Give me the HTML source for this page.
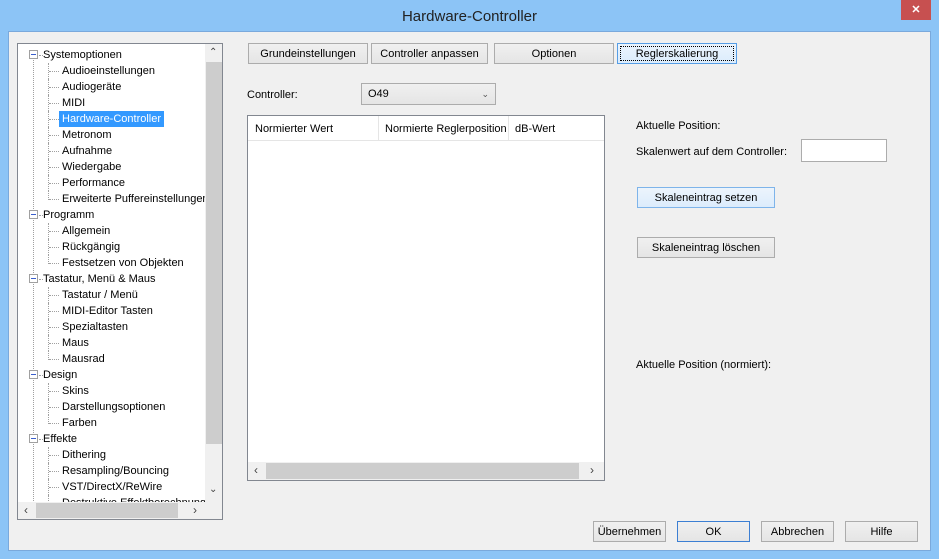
<!DOCTYPE html>
<html><head><meta charset="utf-8"><style>
*{margin:0;padding:0;box-sizing:border-box}
body{width:939px;height:559px;background:#8cc4f6;font-family:"Liberation Sans",sans-serif;font-size:11px;color:#000;position:relative;overflow:hidden}
.a{position:absolute}
.title{left:0;top:8px;width:939px;text-align:center;font-size:15px;color:#222}
.close{left:901px;top:0;width:30px;height:20px;background:#c75050;color:#fff;text-align:center;font-size:11px;line-height:20px;font-weight:bold}
.client{left:8px;top:31px;width:923px;height:520px;background:#f0f0f0;border:1px solid #7aa9dc}
.btn{position:absolute;height:21px;border:1px solid #acacac;background:linear-gradient(#f0f0f0,#e5e5e5);text-align:center;line-height:21px}
.tree{left:17px;top:43px;width:206px;height:477px;background:#fff;border:1px solid #828790}
.row{position:absolute;white-space:nowrap;height:16px;line-height:17px}
.sb{background:#f0f0f0}
.th{background:#cdcdcd}
.exp{position:absolute;width:9px;height:9px;border:1px solid #a0a0a0;background:#fff}
.exp:after{content:"";position:absolute;left:1px;top:3px;width:5px;height:1px;background:#3a5fcd}
.vd{position:absolute;width:1px;border-left:1px dotted #a0a0a0}
.hd{position:absolute;height:1px;border-top:1px dotted #a0a0a0}
</style></head><body>
<div class="a title">Hardware-Controller</div>
<div class="a close">✕</div>
<div class="a client"></div>

<div class="a tree">
<div id="t"></div>
<div class="a sb" style="left:187px;top:0;width:17px;height:458px"></div>
<div class="a th" style="left:188px;top:18px;width:16px;height:382px"></div>
<div class="a" style="left:191px;top:3px;font-size:10px;color:#444">&#8963;</div>
<div class="a" style="left:191px;top:440px;font-size:10px;color:#444">&#8964;</div>
<div class="a sb" style="left:0;top:458px;width:204px;height:17px"></div>
<div class="a th" style="left:18px;top:459px;width:142px;height:15px"></div>
<div class="a" style="left:6px;top:459px;font-size:12px;color:#444">‹</div>
<div class="a" style="left:175px;top:459px;font-size:12px;color:#444">›</div>
</div>

<div class="btn" style="left:248px;top:43px;width:120px">Grundeinstellungen</div>
<div class="btn" style="left:371px;top:43px;width:117px">Controller anpassen</div>
<div class="btn" style="left:494px;top:43px;width:120px">Optionen</div>
<div class="btn" style="left:617px;top:43px;width:120px;border-color:#569de5;background:linear-gradient(#ebf4fd,#dbecfc)"><div style="position:absolute;left:2px;top:2px;right:2px;bottom:2px;border:1px dotted #000"></div>Reglerskalierung</div>

<div class="a" style="left:247px;top:89px">Controller:</div>
<div class="a" style="left:361px;top:83px;width:135px;height:22px;border:1px solid #acacac;background:linear-gradient(#f0f0f0,#e5e5e5);padding-left:6px;line-height:21px">O49<span style="position:absolute;right:6px;top:0;font-size:9px;color:#555">&#8964;</span></div>

<div class="a" style="left:247px;top:115px;width:358px;height:366px;background:#fff;border:1px solid #828790">
<div class="a" style="left:7px;top:7px">Normierter Wert</div>
<div class="a" style="left:130px;top:0;width:1px;height:24px;background:#e5e5e5"></div>
<div class="a" style="left:137px;top:7px">Normierte Reglerposition</div>
<div class="a" style="left:260px;top:0;width:1px;height:24px;background:#e5e5e5"></div>
<div class="a" style="left:267px;top:7px">dB-Wert</div>
<div class="a" style="left:0;top:24px;width:356px;height:1px;background:#e5e5e5"></div>
<div class="a sb" style="left:0;top:346px;width:356px;height:18px"></div>
<div class="a th" style="left:18px;top:347px;width:313px;height:16px"></div>
<div class="a" style="left:6px;top:347px;font-size:12px;color:#444">‹</div>
<div class="a" style="left:342px;top:347px;font-size:12px;color:#444">›</div>
</div>

<div class="a" style="left:636px;top:120px">Aktuelle Position:</div>
<div class="a" style="left:636px;top:146px">Skalenwert auf dem Controller:</div>
<div class="a" style="left:801px;top:139px;width:86px;height:23px;background:#fff;border:1px solid #acacac"></div>
<div class="btn" style="left:637px;top:187px;width:138px;border-color:#7eb4ea;background:linear-gradient(#ecf4fc,#dcecfc)">Skaleneintrag setzen</div>
<div class="btn" style="left:637px;top:237px;width:138px">Skaleneintrag löschen</div>
<div class="a" style="left:636px;top:359px">Aktuelle Position (normiert):</div>

<div class="btn" style="left:593px;top:521px;width:73px">Übernehmen</div>
<div class="btn" style="left:677px;top:521px;width:73px;border-color:#3c7fd3">OK</div>
<div class="btn" style="left:761px;top:521px;width:73px">Abbrechen</div>
<div class="btn" style="left:845px;top:521px;width:73px">Hilfe</div>

<script>
var rows=[[0,"Systemoptionen"],[1,"Audioeinstellungen"],[1,"Audiogeräte"],[1,"MIDI"],[1,"Hardware-Controller",1],[1,"Metronom"],[1,"Aufnahme"],[1,"Wiedergabe"],[1,"Performance"],[1,"Erweiterte Puffereinstellungen"],[0,"Programm"],[1,"Allgemein"],[1,"Rückgängig"],[1,"Festsetzen von Objekten"],[0,"Tastatur, Menü & Maus"],[1,"Tastatur / Menü"],[1,"MIDI-Editor Tasten"],[1,"Spezialtasten"],[1,"Maus"],[1,"Mausrad"],[0,"Design"],[1,"Skins"],[1,"Darstellungsoptionen"],[1,"Farben"],[0,"Effekte"],[1,"Dithering"],[1,"Resampling/Bouncing"],[1,"VST/DirectX/ReWire"],[1,"Destruktive Effektberechnung"]];
var h="";
h+='<div class="vd" style="left:15px;top:12px;height:445px"></div>';
rows.forEach(function(r,i){
 var cy=11+16*i;
 if(r[0]==0){
  h+='<div class="exp" style="left:11px;top:'+(cy-5)+'px"></div>';
  h+='<div class="hd" style="left:21px;top:'+cy+'px;width:4px"></div>';
  h+='<div class="row" style="left:25px;top:'+(cy-8)+'px">'+r[1]+'</div>';
 } else {
  h+='<div class="vd" style="left:30px;top:'+(cy-8)+'px;height:'+(rows[i+1]&&rows[i+1][0]==1||i==rows.length-1?16:9)+'px"></div>';
  h+='<div class="hd" style="left:31px;top:'+cy+'px;width:10px"></div>';
  var st=r[2]?'background:#3399ff;color:#fff;padding:0 3px;':'padding:0 3px;';
  h+='<div class="row" style="left:41px;top:'+(cy-8)+'px;'+st+'">'+r[1]+'</div>';
 }
});
h='<div style="position:absolute;left:0;top:0;width:187px;height:458px;overflow:hidden">'+h+'</div>';
document.getElementById("t").innerHTML=h;
</script>
</body></html>
